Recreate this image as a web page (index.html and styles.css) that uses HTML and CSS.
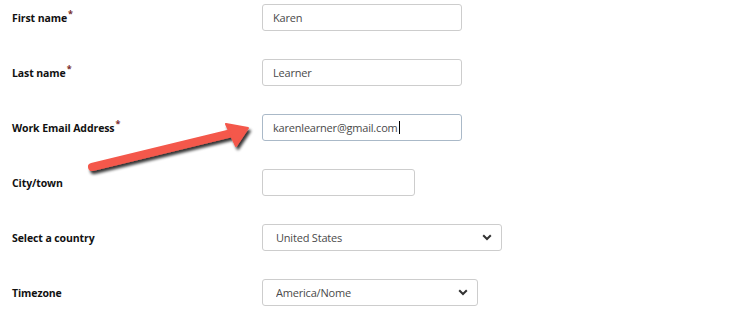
FILE: index.html
```html
<!DOCTYPE html>
<html>
<head>
<meta charset="utf-8">
<link rel="stylesheet" href="styles.css">
</head>
<body>
<form class="form">
  <div class="row">
    <label class="label">First name<span class="req">*</span></label>
    <input class="field w200" type="text" value="Karen">
  </div>
  <div class="row">
    <label class="label">Last name<span class="req">*</span></label>
    <input class="field w200" type="text" value="Learner">
  </div>
  <div class="row">
    <label class="label">Work Email Address<span class="req">*</span></label>
    <div class="field w200 focus">karenlearner@gmail.com<span class="caret"></span></div>
  </div>
  <div class="row">
    <label class="label">City/town</label>
    <input class="field w153" type="text" value="">
  </div>
  <div class="row">
    <label class="label">Select a country</label>
    <div class="select-wrap w240">
      <select class="field select"><option>United States</option></select>
      <svg class="chev" width="10" height="7" viewBox="0 0 10 7"><path d="M1.2 1.2 L5 5 L8.8 1.2" fill="none" stroke="#333" stroke-width="2"/></svg>
    </div>
  </div>
  <div class="row">
    <label class="label">Timezone</label>
    <div class="select-wrap w216">
      <select class="field select"><option>America/Nome</option></select>
      <svg class="chev" width="10" height="7" viewBox="0 0 10 7"><path d="M1.2 1.2 L5 5 L8.8 1.2" fill="none" stroke="#333" stroke-width="2"/></svg>
    </div>
  </div>
</form>
<svg class="arrow" width="751" height="315" viewBox="0 0 751 315">
  <defs>
    <filter id="sh" x="-20%" y="-50%" width="140%" height="200%">
      <feGaussianBlur in="SourceAlpha" stdDeviation="1.6"/>
      <feOffset dx="1.5" dy="2.5" result="b"/>
      <feComponentTransfer><feFuncA type="linear" slope="0.8"/></feComponentTransfer>
      <feMerge><feMergeNode/><feMergeNode in="SourceGraphic"/></feMerge>
    </filter>
  </defs>
  <g filter="url(#sh)">
    <line x1="92" y1="167" x2="236" y2="132" stroke="#f4584b" stroke-width="8" stroke-linecap="round"/>
    <path d="M226 124 L248 128 L236 146 Z" fill="#f4584b" stroke="#f4584b" stroke-width="2" stroke-linejoin="round"/>
  </g>
</svg>
</body>
</html>
```
FILE: styles.css
```css
html, body {
  margin: 0;
  padding: 0;
  background: #ffffff;
}
body {
  position: relative;
  width: 751px;
  height: 315px;
  overflow: hidden;
  font-family: "Open Sans", "Noto Sans", sans-serif;
}
.form {
  display: flex;
  flex-direction: column;
  gap: 28px;
  padding: 4px 0 0 12px;
}
.row {
  display: grid;
  grid-template-columns: 250px auto;
  align-items: center;
  height: 27px;
}
.label {
  font-size: 10.5px;
  font-weight: 700;
  color: #111;
  letter-spacing: -0.1px;
}
.req {
  color: #7a2e2e;
  font-size: 9px;
  position: relative;
  top: -5px;
  margin-left: 1px;
}
.field {
  box-sizing: border-box;
  height: 27px;
  border: 1px solid #cdcdcd;
  border-radius: 3px;
  padding: 0 10px;
  font-family: "Open Sans", "Noto Sans", sans-serif;
  font-size: 11px;
  letter-spacing: -0.2px;
  color: #4a4a4a;
  background: #fff;
  outline: none;
  margin: 0;
}
.focus {
  display: flex;
  align-items: center;
  border-color: #aab9c8;
}
.caret {
  display: inline-block;
  width: 1px;
  height: 13px;
  background: #000;
  margin-left: 1px;
}
.w200 { width: 200px; }
.w153 { width: 153px; }
.w240 { width: 240px; }
.w216 { width: 216px; }
.select-wrap {
  position: relative;
  height: 27px;
}
.select {
  width: 100%;
  appearance: none;
  -webkit-appearance: none;
  padding-left: 13px;
}
.chev {
  position: absolute;
  right: 10px;
  top: 10px;
  pointer-events: none;
}
.arrow {
  position: absolute;
  left: 0;
  top: 0;
  pointer-events: none;
}
```
